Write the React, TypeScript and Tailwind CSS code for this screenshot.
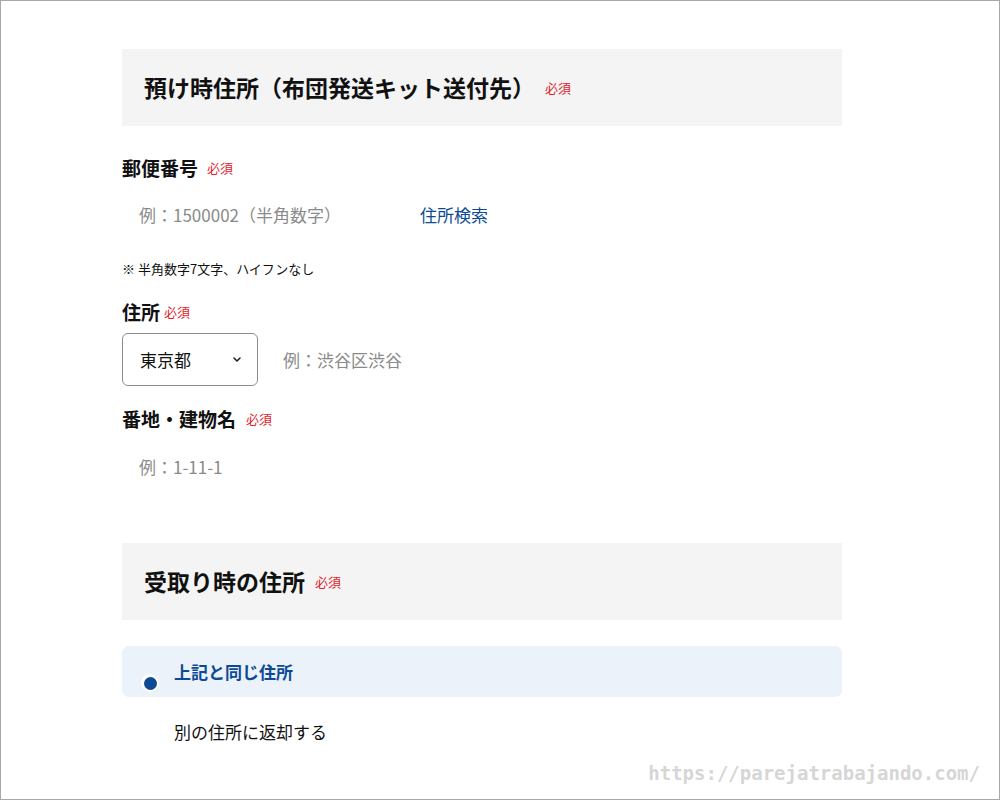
import React from "react";

const jp = { fontFamily: '"Noto Sans CJK JP", "Noto Sans", sans-serif' };

function Required({ className = "" }: { className?: string }) {
  return <span className={`text-[13px] text-[#e0242b] font-normal ${className}`}>必須</span>;
}

function SectionHead({ title, className = "" }: { title: string; className?: string }) {
  return (
    <div className={`h-[77px] bg-[#f4f4f4] flex items-center pl-[22px] ${className}`}>
      <h2 className="text-[23px] font-bold text-[#111] leading-none">{title}</h2>
      <Required className="ml-[10px]" />
    </div>
  );
}

export default function App() {
  return (
    <div
      className="w-[1000px] h-[800px] bg-white border border-[#a8a8a8] overflow-hidden relative"
      style={jp}
    >
      <div className="w-[720px] ml-[121px] mt-[48px]">
        <SectionHead title="預け時住所（布団発送キット送付先）" />

        {/* 郵便番号 */}
        <div className="flex items-center mt-[31px] h-[22px]">
          <span className="text-[19px] font-bold text-[#111]">郵便番号</span>
          <Required className="ml-[9px]" />
        </div>
        <div className="flex items-center mt-[24px] h-[24px]">
          <span className="ml-[17px] w-[281px] text-[17px] text-[#8a8a8a]">例：1500002（半角数字）</span>
          <span className="text-[17px] text-[#0d4a94]">住所検索</span>
        </div>
        <p className="mt-[34px] text-[13px] text-[#111] leading-[16px]">※ 半角数字7文字、ハイフンなし</p>

        {/* 住所 */}
        <div className="flex items-center mt-[24px] h-[22px]">
          <span className="text-[19px] font-bold text-[#111]">住所</span>
          <Required className="ml-[4px]" />
        </div>
        <div className="flex items-center mt-[10px]">
          <div className="w-[136px] h-[53px] border border-[#8c8c8c] rounded-[6px] flex items-center justify-between pl-[17px] pr-[15px]">
            <span className="text-[17px] text-[#111]">東京都</span>
            <svg width="10" height="7" viewBox="0 0 10 7" fill="none">
              <path d="M2 2l3 3 3-3" stroke="#222" strokeWidth="1.6" strokeLinecap="round" strokeLinejoin="round" />
            </svg>
          </div>
          <span className="ml-[25px] text-[17px] text-[#8a8a8a]">例：渋谷区渋谷</span>
        </div>

        {/* 番地・建物名 */}
        <div className="flex items-center mt-[22px] h-[22px]">
          <span className="text-[19px] font-bold text-[#111]">番地・建物名</span>
          <Required className="ml-[10px]" />
        </div>
        <div className="mt-[25px] h-[24px] flex items-center">
          <span className="ml-[17px] text-[17px] text-[#8a8a8a]">例：1-11-1</span>
        </div>

        <SectionHead title="受取り時の住所" className="mt-[64px]" />

        {/* radio */}
        <div className="relative mt-[26px] h-[51px] bg-[#ebf2fa] rounded-[7px] flex items-center pl-[52px]">
          <span className="text-[17px] font-bold text-[#0d4a94]">上記と同じ住所</span>
          <span className="absolute left-[19px] top-[28px] w-[18px] h-[18px] rounded-full bg-white flex items-center justify-center">
            <span className="w-[13px] h-[13px] rounded-full bg-[#0d4a94]" />
          </span>
        </div>
        <div className="h-[24px] mt-[23px] flex items-center pl-[52px]">
          <span className="text-[17px] text-[#111]">別の住所に返却する</span>
        </div>
      </div>

      <span
        className="absolute right-[19px] bottom-[12px] text-[19px] font-bold text-[#d6d6d6]"
        style={{ fontFamily: '"DejaVu Sans Mono", monospace' }}
      >
        https://parejatrabajando.com/
      </span>
    </div>
  );
}
